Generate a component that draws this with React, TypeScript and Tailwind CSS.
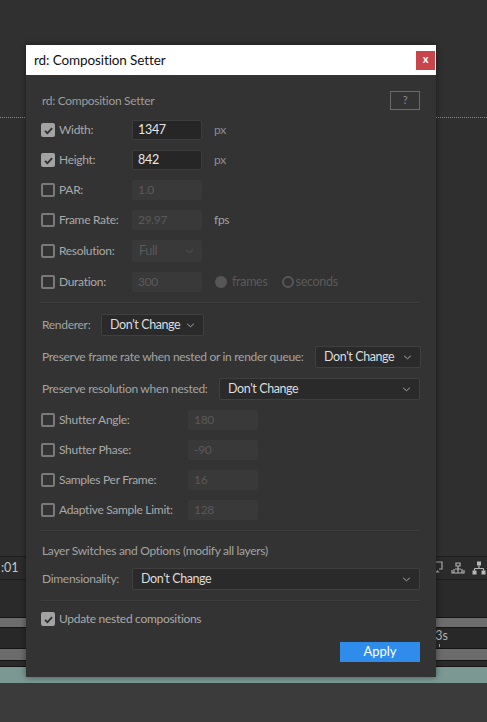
import type { ReactNode } from "react";

function Check({ on }: { on?: boolean }) {
  if (on) {
    return (
      <span className="flex h-[14px] w-[14px] shrink-0 items-center justify-center rounded-[2px] bg-[#a3a3a3]">
        <svg viewBox="0 0 12 12" className="h-[11px] w-[11px]">
          <path d="M2.2 6.4l2.6 2.6L9.9 3.4" fill="none" stroke="#2f2f2f" strokeWidth="2" />
        </svg>
      </span>
    );
  }
  return <span className="h-[14px] w-[14px] shrink-0 rounded-[2px] border-2 border-[#7a7a7a]" />;
}

function Chevron({ color = "#a8a8a8" }: { color?: string }) {
  return (
    <svg viewBox="0 0 10 6" className="h-[5px] w-[9px]">
      <path d="M1 1l4 3.5L9 1" fill="none" stroke={color} strokeWidth="1.2" />
    </svg>
  );
}

function Input({ value, off }: { value: string; off?: boolean }) {
  return off ? (
    <div className="flex h-[20px] w-[70px] shrink-0 items-center rounded-[2px] bg-[#393939] px-[6px] text-[12px] text-[#595959]">
      {value}
    </div>
  ) : (
    <div className="flex h-[20px] w-[70px] shrink-0 items-center rounded-[2px] border border-[#3d3d3d] bg-[#262626] px-[5px] text-[12.5px] text-[#e6e6e6]">
      {value}
    </div>
  );
}

function Select({ value, className = "" }: { value: string; className?: string }) {
  return (
    <div
      className={`flex h-[22px] shrink-0 items-center justify-between rounded-[2px] border border-[#404040] bg-[#2a2a2a] pl-[8px] pr-[8px] text-[12.5px] tracking-[-0.4px] whitespace-nowrap text-[#dcdcdc] ${className}`}
    >
      <span>{value}</span>
      <Chevron />
    </div>
  );
}

function Row({ on, label, labelW, children, h = "h-[20px]" }: { on?: boolean; label: string; labelW: string; children: ReactNode; h?: string }) {
  return (
    <div className={`flex items-center whitespace-nowrap ${h}`}>
      <Check on={on} />
      <span className={`ml-[4px] shrink-0 text-[12px] tracking-[-0.3px] text-[#a9a9a9] ${labelW}`}>{label}</span>
      {children}
    </div>
  );
}

function Divider() {
  return <div className="h-[2px] border-t border-[#3e3e3e] bg-[#2e2e2e]" />;
}

function Dialog() {
  return (
    <div className="absolute left-[26px] top-[45px] w-[410px] whitespace-nowrap shadow-[0_0_6px_rgba(0,0,0,0.45)]">
      <div className="flex h-[30px] items-center justify-between bg-white pl-[8px] pr-[1px]">
        <span className="text-[13.5px] tracking-[-0.1px] text-[#111]">rd: Composition Setter</span>
        <span className="flex h-[19px] w-[19px] items-center justify-center bg-[#c8464b] pb-[2px] text-[11px] font-bold text-white">
          x
        </span>
      </div>
      <div className="flex flex-col bg-[#333333] pb-[15px] pl-[15px] pr-[16px] pt-[16px] text-[12px] tracking-[-0.3px]">
        <div className="flex h-[19px] items-center justify-between">
          <span className="pl-[1px] text-[#9d9d9d]">rd: Composition Setter</span>
          <span className="flex h-[19px] w-[30px] items-center justify-center border border-[#6a6a6a] text-[11px] text-[#8a8a8a]">
            ?
          </span>
        </div>

        <div className="mt-[10px] flex flex-col gap-[10px]">
          <Row on label="Width:" labelW="w-[73px]">
            <Input value="1347" />
            <span className="ml-[12px] text-[#8f8f8f]">px</span>
          </Row>
          <Row on label="Height:" labelW="w-[73px]">
            <Input value="842" />
            <span className="ml-[12px] text-[#8f8f8f]">px</span>
          </Row>
          <Row label="PAR:" labelW="w-[73px]">
            <Input value="1.0" off />
          </Row>
          <Row label="Frame Rate:" labelW="w-[73px]">
            <Input value="29.97" off />
            <span className="ml-[12px] text-[#a3a3a3]">fps</span>
          </Row>
          <Row label="Resolution:" labelW="w-[73px]" h="h-[22px]">
            <div className="flex h-[22px] w-[70px] items-center justify-between rounded-[2px] bg-[#393939] pl-[7px] pr-[8px] text-[12.5px] text-[#595959]">
              <span>Full</span>
              <Chevron color="#555" />
            </div>
          </Row>
          <Row label="Duration:" labelW="w-[73px]">
            <Input value="300" off />
            <span className="ml-[13px] h-[12px] w-[12px] rounded-full bg-[#565656]" />
            <span className="ml-[5px] text-[12.5px] text-[#5a5a5a]">frames</span>
            <span className="ml-[14px] h-[12px] w-[12px] rounded-full border-2 border-[#565656]" />
            <span className="ml-[2px] text-[12.5px] text-[#5a5a5a]">seconds</span>
          </Row>
        </div>

        <div className="mt-[10px]">
          <Divider />
        </div>

        <div className="mt-[10px] flex flex-col gap-[10px] text-[#a3a3a3]">
          <div className="flex items-center pl-[1px]">
            <span className="w-[59px] shrink-0">Renderer:</span>
            <Select value="Don't Change" className="w-[103px]" />
          </div>
          <div className="flex items-center pl-[1px]">
            <span className="w-[273px] shrink-0">Preserve frame rate when nested or in render queue:</span>
            <Select value="Don't Change" className="w-[106px]" />
          </div>
          <div className="flex items-center pl-[1px]">
            <span className="w-[177px] shrink-0">Preserve resolution when nested:</span>
            <Select value="Don't Change" className="flex-1" />
          </div>
        </div>

        <div className="mt-[10px] flex flex-col gap-[10px]">
          <Row label="Shutter Angle:" labelW="w-[129px]">
            <Input value="180" off />
          </Row>
          <Row label="Shutter Phase:" labelW="w-[129px]">
            <Input value="-90" off />
          </Row>
          <Row label="Samples Per Frame:" labelW="w-[129px]">
            <Input value="16" off />
          </Row>
          <Row label="Adaptive Sample Limit:" labelW="w-[129px]">
            <Input value="128" off />
          </Row>
        </div>

        <div className="mt-[10px]">
          <Divider />
        </div>

        <div className="mt-[10px] pl-[1px] text-[#a3a3a3]">Layer Switches and Options (modify all layers)</div>
        <div className="mt-[8px] flex items-center pl-[1px] text-[#a3a3a3]">
          <span className="w-[90px] shrink-0">Dimensionality:</span>
          <Select value="Don't Change" className="flex-1" />
        </div>

        <div className="mt-[10px]">
          <Divider />
        </div>

        <div className="mt-[9px] flex h-[16px] items-center">
          <Check on />
          <span className="ml-[4px] text-[#a9a9a9]">Update nested compositions</span>
        </div>

        <div className="mt-[15px] flex justify-end">
          <button className="h-[20px] w-[80px] bg-[#2f8ceb] text-[13px] tracking-normal text-white">Apply</button>
        </div>
      </div>
    </div>
  );
}

export default function App() {
  return (
    <div className="relative h-[722px] w-[487px] overflow-hidden bg-[#303030] font-['Lato',sans-serif]">
      <div className="h-[117px]" />
      <div className="h-[1px] border-t border-dotted border-[#7e8d8c]" />
      <div className="h-[438px] bg-[#2f2f2f]" />
      <div className="flex h-[24px] items-center justify-between border-y border-[#1f1f1f] bg-[#2b2b2b]">
        <span className="pl-[1px] text-[12.5px] text-[#c4c4c4]">:01</span>
        <div className="flex items-center gap-[7px] pr-[1px]">
          <svg viewBox="0 0 12 14" className="h-[14px] w-[12px]">
            <path d="M1 1h9v7H7M4 8H1V1" fill="none" stroke="#a8a8a8" strokeWidth="1.2" />
            <path d="M5.5 9l-2 2.5h4z" fill="#a8a8a8" />
          </svg>
          <svg viewBox="0 0 14 12" className="h-[12px] w-[14px]">
            <path d="M5 1h4v3H5zM7 4v3M1 8v3h12V8M4 7h6" fill="none" stroke="#b0b0b0" strokeWidth="1.2" />
            <path d="M3 7v4M7 7v4M11 7v4" stroke="#b0b0b0" strokeWidth="1.2" />
          </svg>
          <svg viewBox="0 0 14 14" className="h-[14px] w-[14px]">
            <rect x="5" y="0.5" width="4" height="4" fill="#b8b8b8" />
            <path d="M7 4.5v3M2.5 7.5h9M2.5 7.5v2M11.5 7.5v2" fill="none" stroke="#b8b8b8" strokeWidth="1.2" />
            <rect x="0.5" y="9.5" width="4" height="4" fill="#b8b8b8" />
            <rect x="9.5" y="9.5" width="4" height="4" fill="#b8b8b8" />
          </svg>
        </div>
      </div>
      <div className="h-[37px] bg-[#2a2a2a]" />
      <div className="h-[11px] border-y border-[#151515] bg-[#6d6d6d]" />
      <div className="flex h-[20px] items-start justify-end bg-[#282828] pr-[39px]">
        <div className="flex flex-col items-start">
          <span className="text-[12.5px] leading-[16px] text-[#b3b3b3]">3s</span>
          <span className="ml-[4px] h-[3px] w-[1px] bg-[#9a9a9a]" />
        </div>
      </div>
      <div className="h-[13px] border-y border-[#151515] bg-[#6b6b6b]" />
      <div className="h-[6px] border-b border-[#151515] bg-[#2a2a2a]" />
      <div className="h-[16px] bg-[#7b9893]" />
      <div className="h-[40px] bg-[#3b3b3b]" />
      <Dialog />
    </div>
  );
}
